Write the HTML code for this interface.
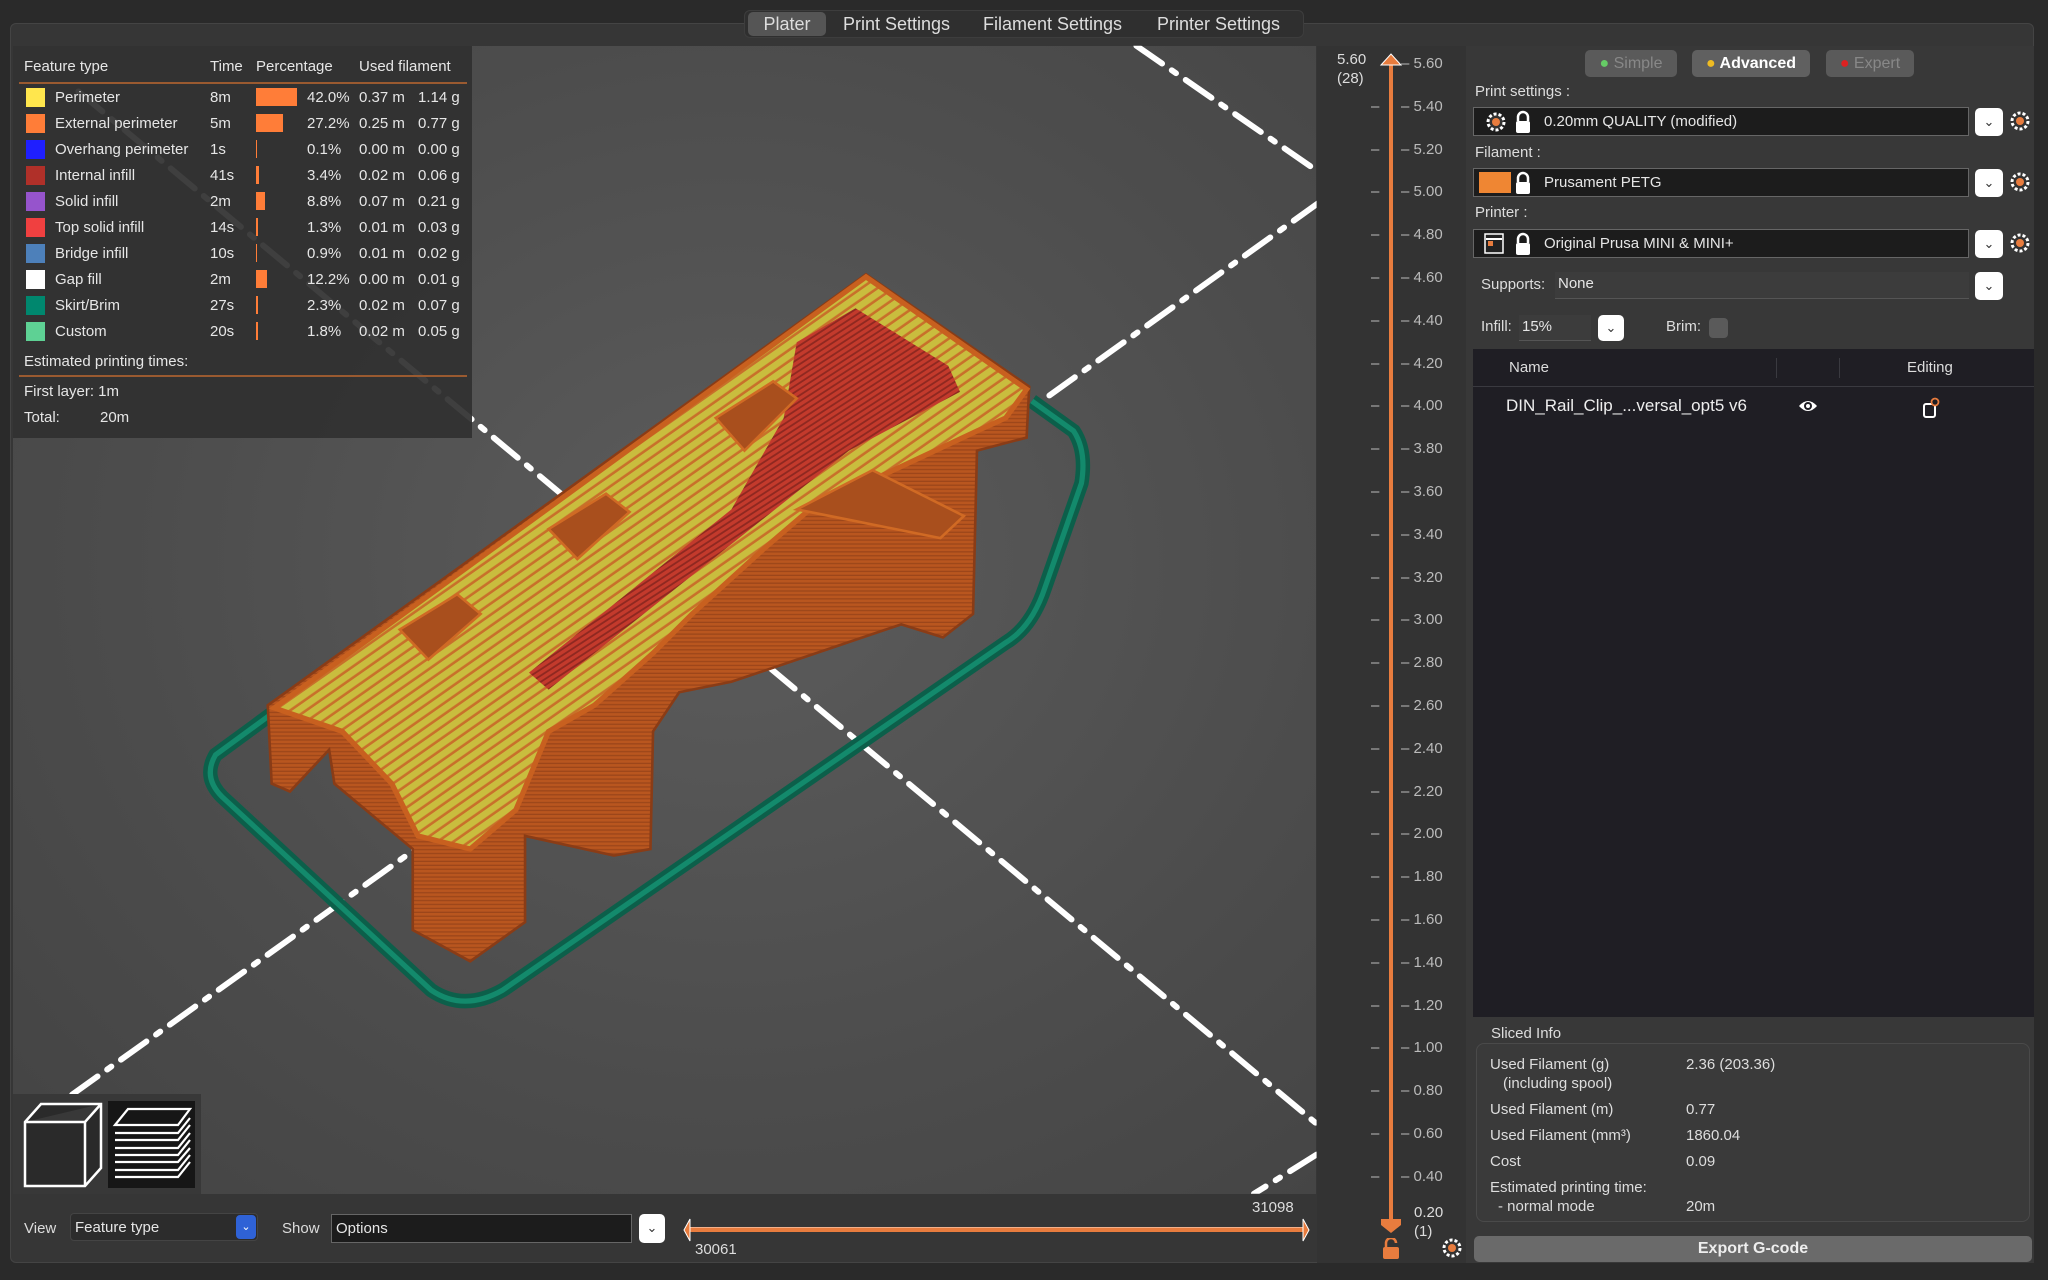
<!DOCTYPE html>
<html><head><meta charset="utf-8"><style>
*{margin:0;padding:0;box-sizing:border-box}
body{width:2048px;height:1280px;background:#2a2a2a;font-family:"Liberation Sans",sans-serif;color:#e6e6e6;position:relative;overflow:hidden;font-size:15px}
.a{position:absolute}
.frame{left:10px;top:23px;width:2024px;height:1240px;background:#363636;border:1px solid #444;border-radius:6px}
.vp{left:13px;top:46px;width:1303px;height:1148px;background:radial-gradient(ellipse at 55% 45%,#5c5c5c,#4c4c4c 60%,#434343)}
.tabs{left:744px;top:10px;height:28px;width:560px;background:#2f2f2f;border:1px solid #3d3d3d;border-radius:6px}
.tab{top:0;height:26px;line-height:26px;font-size:18px;color:#ddd}
.leg{left:13px;top:46px;width:459px;height:392px;background:rgba(48,48,48,0.93)}
.leg div{position:absolute;white-space:nowrap}
.sw{width:19px;height:19px}
.bar{height:18px;background:#ff7d38}
.line{height:2px;background:#9a5a30}
.rp{left:1466px;top:46px;width:568px;height:1217px;background:#383838}
.vs{left:1317px;top:46px;width:149px;height:1217px;background:#333}
.btn{border-radius:5px;background:#5a5a5a;height:27px;font-size:16px;line-height:27px;text-align:center;color:#888}
.combo{background:#1c1c1c;border:1px solid #666;height:29px;font-size:15px;line-height:27px}
.dd{width:28px;height:28px;background:#fff;border-radius:5px;color:#333;text-align:center;font-size:13px;line-height:28px}
.lbl{font-size:15px;color:#ddd}
.ol{left:1473px;top:349px;width:561px;height:668px;background:#1f1e24}
.si div{position:absolute;white-space:nowrap;font-size:15px;color:#ddd}
.tk{font-size:15px;color:#bbb;white-space:nowrap}
</style></head><body>
<div class="a frame"></div>
<div class="a vp"></div>
<svg class="a" style="left:0;top:0" width="2048" height="1280" viewBox="0 0 1568 980">
<defs>
<pattern id="st" width="6" height="4" patternUnits="userSpaceOnUse" patternTransform="rotate(-33)"><rect width="6" height="4" fill="#c33a2c"/><rect y="2.6" width="6" height="1.4" fill="#8f2820"/></pattern>
<pattern id="ly" width="4" height="3" patternUnits="userSpaceOnUse"><rect width="4" height="3" fill="#b9561f"/><rect y="2" width="4" height="1" fill="#9c461a"/></pattern>
<pattern id="yl" width="8" height="7" patternUnits="userSpaceOnUse" patternTransform="rotate(-35)"><rect width="8" height="7" fill="#c9bd3e"/><rect y="5" width="8" height="2" fill="#c8702a"/></pattern>
<clipPath id="vc"><rect x="10" y="35" width="998" height="879"/></clipPath>
</defs>
<g clip-path="url(#vc)">
<g stroke="#fff" stroke-width="4.5" stroke-dasharray="24 9 4 9" fill="none" stroke-linecap="round">
<line x1="870" y1="35" x2="1010" y2="132"/>
<line x1="60" y1="70" x2="1010" y2="862"/>
<line x1="1010" y1="155" x2="5" y2="874"/>
<line x1="1008" y1="884" x2="960" y2="914"/>
</g>
<path d="M790,307 L822,330 Q832,345 828,370 L800,450 Q790,480 770,492 L385,758 Q355,775 330,758 L170,610 Q155,595 165,578 L210,545" stroke="#0c5f4a" stroke-width="11" fill="none"/>
<path d="M790,307 L822,330 Q832,345 828,370 L800,450 Q790,480 770,492 L385,758 Q355,775 330,758 L170,610 Q155,595 165,578 L210,545" stroke="#138a6c" stroke-width="4" fill="none"/>
<path d="M663,210 L788,296 L786,335 L748,345 L745,470 L722,488 L690,478 L560,522 L520,530 L500,560 L498,650 L470,655 L402,640 L402,706 L360,736 L316,712 L316,650 L256,600 L252,574 L222,606 L208,600 L205,540 Z" fill="url(#ly)" stroke="#8a3c16" stroke-width="2"/>
<path d="M663,212 L786,298 L770,320 L748,330 L620,390 L585,420 L530,470 L500,500 L455,540 L420,560 L395,620 L360,650 L320,640 L300,600 L262,560 L210,542 Z" fill="url(#yl)" stroke="#c8601f" stroke-width="4"/>
<path d="M655,236 L726,280 L735,300 L650,345 L420,528 L405,515 L560,390 L600,320 L610,262 Z" fill="url(#st)"/>
<g fill="#a94f1d" stroke="#d06a24" stroke-width="2">
<path d="M548,320 L592,292 L610,305 L570,345 Z"/>
<path d="M420,405 L464,378 L482,392 L442,428 Z"/>
<path d="M306,482 L350,455 L368,470 L328,505 Z"/>
<path d="M610,390 L668,360 L738,395 L720,412 L650,398 Z"/>
</g>
</g>
</svg>
<div class="a tabs">
<div class="a tab" style="left:3px;top:1px;width:78px;height:24px;background:#555;border-radius:5px;text-align:center;line-height:24px">Plater</div>
<div class="a tab" style="left:98px">Print Settings</div>
<div class="a tab" style="left:238px">Filament Settings</div>
<div class="a tab" style="left:412px">Printer Settings</div>
</div>
<div class="a leg">
<div style="left:11px;top:12px">Feature type</div><div style="left:197px;top:12px">Time</div><div style="left:243px;top:12px">Percentage</div><div style="left:346px;top:12px">Used filament</div>
<div class="line" style="left:6px;top:36px;width:448px"></div>
<div class="sw" style="left:13px;top:42px;background:#ffe64d"></div><div style="left:42px;top:43px">Perimeter</div><div style="left:197px;top:43px">8m</div><div class="bar" style="left:243px;top:42px;width:41px"></div><div style="left:294px;top:43px">42.0%</div><div style="left:346px;top:43px">0.37 m</div><div style="left:405px;top:43px">1.14 g</div>
<div class="sw" style="left:13px;top:68px;background:#ff7d38"></div><div style="left:42px;top:69px">External perimeter</div><div style="left:197px;top:69px">5m</div><div class="bar" style="left:243px;top:68px;width:27px"></div><div style="left:294px;top:69px">27.2%</div><div style="left:346px;top:69px">0.25 m</div><div style="left:405px;top:69px">0.77 g</div>
<div class="sw" style="left:13px;top:94px;background:#1f1fff"></div><div style="left:42px;top:95px">Overhang perimeter</div><div style="left:197px;top:95px">1s</div><div class="bar" style="left:243px;top:94px;width:1px"></div><div style="left:294px;top:95px">0.1%</div><div style="left:346px;top:95px">0.00 m</div><div style="left:405px;top:95px">0.00 g</div>
<div class="sw" style="left:13px;top:120px;background:#b03029"></div><div style="left:42px;top:121px">Internal infill</div><div style="left:197px;top:121px">41s</div><div class="bar" style="left:243px;top:120px;width:3px"></div><div style="left:294px;top:121px">3.4%</div><div style="left:346px;top:121px">0.02 m</div><div style="left:405px;top:121px">0.06 g</div>
<div class="sw" style="left:13px;top:146px;background:#9654cc"></div><div style="left:42px;top:147px">Solid infill</div><div style="left:197px;top:147px">2m</div><div class="bar" style="left:243px;top:146px;width:9px"></div><div style="left:294px;top:147px">8.8%</div><div style="left:346px;top:147px">0.07 m</div><div style="left:405px;top:147px">0.21 g</div>
<div class="sw" style="left:13px;top:172px;background:#f04040"></div><div style="left:42px;top:173px">Top solid infill</div><div style="left:197px;top:173px">14s</div><div class="bar" style="left:243px;top:172px;width:2px"></div><div style="left:294px;top:173px">1.3%</div><div style="left:346px;top:173px">0.01 m</div><div style="left:405px;top:173px">0.03 g</div>
<div class="sw" style="left:13px;top:198px;background:#4d80ba"></div><div style="left:42px;top:199px">Bridge infill</div><div style="left:197px;top:199px">10s</div><div class="bar" style="left:243px;top:198px;width:1px"></div><div style="left:294px;top:199px">0.9%</div><div style="left:346px;top:199px">0.01 m</div><div style="left:405px;top:199px">0.02 g</div>
<div class="sw" style="left:13px;top:224px;background:#fff"></div><div style="left:42px;top:225px">Gap fill</div><div style="left:197px;top:225px">2m</div><div class="bar" style="left:243px;top:224px;width:11px"></div><div style="left:294px;top:225px">12.2%</div><div style="left:346px;top:225px">0.00 m</div><div style="left:405px;top:225px">0.01 g</div>
<div class="sw" style="left:13px;top:250px;background:#00876e"></div><div style="left:42px;top:251px">Skirt/Brim</div><div style="left:197px;top:251px">27s</div><div class="bar" style="left:243px;top:250px;width:2px"></div><div style="left:294px;top:251px">2.3%</div><div style="left:346px;top:251px">0.02 m</div><div style="left:405px;top:251px">0.07 g</div>
<div class="sw" style="left:13px;top:276px;background:#5ed194"></div><div style="left:42px;top:277px">Custom</div><div style="left:197px;top:277px">20s</div><div class="bar" style="left:243px;top:276px;width:2px"></div><div style="left:294px;top:277px">1.8%</div><div style="left:346px;top:277px">0.02 m</div><div style="left:405px;top:277px">0.05 g</div>
<div style="left:11px;top:307px">Estimated printing times:</div>
<div class="line" style="left:6px;top:329px;width:448px"></div>
<div style="left:11px;top:337px">First layer: 1m</div>
<div style="left:11px;top:363px">Total:</div><div style="left:87px;top:363px">20m</div>
</div>
<div class="a" style="left:13px;top:1094px;width:188px;height:100px;background:#383838"></div>
<svg class="a" style="left:18px;top:1100px" width="180" height="90" viewBox="0 0 180 90">
<path d="M7,22 L23,4 L83,4 L83,68 L67,86 L7,86 Z M7,22 L67,22 L83,4 M67,22 L67,86" fill="#2a2a2a" stroke="#fff" stroke-width="2.5"/>
<rect x="90" y="1" width="87" height="87" fill="#161616"/>
<g stroke="#fff" stroke-width="2.2" fill="none"><path d="M97,25 L110,9 L172,9 L160,25 Z"/>
<path d="M97,33 L160,33 L172,18"/><path d="M97,40 L160,40 L172,25"/><path d="M97,48 L160,48 L172,33"/><path d="M97,55 L160,55 L172,40"/><path d="M97,62 L160,62 L172,48"/><path d="M97,70 L160,70 L172,55"/><path d="M97,77 L160,77 L172,62"/></g>
</svg>
<div class="a lbl" style="left:24px;top:1220px">View</div>
<div class="a combo" style="left:70px;top:1213px;width:188px;height:28px;background:#2c2c2c;border-color:#444;border-radius:4px;padding-left:4px">Feature type</div>
<div class="a" style="left:236px;top:1215px;width:20px;height:24px;background:#2f62d6;border-radius:4px;color:#fff;font-size:11px;text-align:center;line-height:24px">&#8964;</div>
<div class="a lbl" style="left:282px;top:1220px">Show</div>
<div class="a combo" style="left:331px;top:1214px;width:301px;padding-left:4px">Options</div>
<div class="a dd" style="left:639px;top:1214px;width:26px;height:29px">&#8964;</div>
<div class="a" style="left:688px;top:1227px;width:616px;height:5px;background:#e87c3e;border-top:1px solid #f3b08a"></div>
<svg class="a" style="left:682px;top:1217px" width="630" height="26"><path d="M2,13 L8,2 L8,24 Z" fill="#e87c3e" stroke="#fff" stroke-width="1"/><path d="M627,13 L621,2 L621,24 Z" fill="#e87c3e" stroke="#fff" stroke-width="1"/></svg>
<div class="a tk" style="left:1252px;top:1199px;color:#ddd">31098</div>
<div class="a tk" style="left:695px;top:1241px;color:#ddd">30061</div>
<div class="a vs"></div>
<div class="a" style="left:1389px;top:62px;width:4px;height:1164px;background:#e87c3e"></div>
<svg class="a" style="left:1379px;top:52px" width="24" height="14"><path d="M2,13 L12,2 L22,13 Z" fill="#e87c3e" stroke="#fff"/></svg>
<svg class="a" style="left:1379px;top:1218px" width="24" height="16"><path d="M2,1 L22,1 L22,7 L12,15 L2,7 Z" fill="#e87c3e"/></svg>
<div class="a" style="left:1337px;top:50px;font-size:15px;line-height:19px;color:#ddd">5.60<br>(28)</div>
<div class="a" style="left:1414px;top:1203px;font-size:15px;line-height:19px;color:#ddd">0.20<br>(1)</div>
<div class="a" id="ticks"></div>
<svg class="a" style="left:1381px;top:1238px" width="20" height="22"><path d="M5,9 V5 a5,5 0 0 1 10,0" stroke="#e87c3e" stroke-width="2.5" fill="none"/><rect x="2" y="9" width="16" height="12" rx="2" fill="#e87c3e"/></svg>
<svg class="a" style="left:1441px;top:1237px" width="22" height="22"><circle cx="11" cy="11" r="8" fill="#333" stroke="#fff" stroke-width="3" stroke-dasharray="3 2"/><circle cx="11" cy="11" r="4" fill="#e87c3e"/></svg>
<div class="a rp"></div>
<div class="a btn" style="left:1585px;top:50px;width:92px"><span style="color:#6c6">●</span> Simple</div>
<div class="a btn" style="left:1692px;top:50px;width:118px;color:#fff;font-weight:bold;background:#606060"><span style="color:#eebb22">●</span> Advanced</div>
<div class="a btn" style="left:1826px;top:50px;width:88px"><span style="color:#d22">●</span> Expert</div>
<div class="a lbl" style="left:1475px;top:83px">Print settings :</div>
<div class="a combo" style="left:1473px;top:107px;width:496px;padding-left:70px">0.20mm QUALITY (modified)</div>
<div class="a lbl" style="left:1475px;top:144px">Filament :</div>
<div class="a combo" style="left:1473px;top:168px;width:496px;padding-left:70px">Prusament PETG</div>
<div class="a" style="left:1479px;top:172px;width:32px;height:21px;background:#ef8633"></div>
<div class="a lbl" style="left:1475px;top:204px">Printer :</div>
<div class="a combo" style="left:1473px;top:229px;width:496px;padding-left:70px">Original Prusa MINI &amp; MINI+</div>
<svg class="a" style="left:1484px;top:233px" width="20" height="21"><rect x="1" y="1" width="18" height="19" fill="#222" stroke="#fff" stroke-width="1.5"/><rect x="2" y="5" width="16" height="2" fill="#fff"/><rect x="4" y="8" width="5" height="5" fill="#e87c3e"/></svg>
<svg class="a" style="left:1485px;top:111px" width="22" height="22"><circle cx="11" cy="11" r="8" fill="#333" stroke="#fff" stroke-width="3" stroke-dasharray="3 2"/><circle cx="11" cy="11" r="4" fill="#e87c3e"/></svg>
<svg class="a" style="left:1514px;top:110px" width="18" height="150"><g fill="#fff"><path d="M4,11 V7 a5,5 0 0 1 10,0 V11" stroke="#fff" stroke-width="2.5" fill="none"/><rect x="2" y="11" width="14" height="12" rx="2"/><path d="M4,72 V68 a5,5 0 0 1 10,0 V72" stroke="#fff" stroke-width="2.5" fill="none"/><rect x="2" y="72" width="14" height="12" rx="2"/><path d="M4,133 V129 a5,5 0 0 1 10,0 V133" stroke="#fff" stroke-width="2.5" fill="none"/><rect x="2" y="133" width="14" height="12" rx="2"/></g></svg>
<div class="a dd" style="left:1975px;top:108px">&#8964;</div>
<div class="a dd" style="left:1975px;top:169px">&#8964;</div>
<div class="a dd" style="left:1975px;top:230px">&#8964;</div>
<div class="a dd" style="left:1975px;top:272px">&#8964;</div>
<div class="a dd" style="left:1598px;top:315px;width:26px;height:26px;line-height:26px">&#8964;</div>
<svg class="a" style="left:2009px;top:110px" width="22" height="150"><g fill="#333" stroke="#fff" stroke-width="3" stroke-dasharray="3 2"><circle cx="11" cy="11" r="8"/><circle cx="11" cy="72" r="8"/><circle cx="11" cy="133" r="8"/></g><g fill="#e87c3e"><circle cx="11" cy="11" r="4"/><circle cx="11" cy="72" r="4"/><circle cx="11" cy="133" r="4"/></g></svg>
<div class="a lbl" style="left:1481px;top:276px">Supports:</div>
<div class="a" style="left:1555px;top:272px;width:414px;height:27px;background:#3c3c3c;border-bottom:1px solid #555;font-size:15px;padding:3px 3px">None</div>
<div class="a lbl" style="left:1481px;top:318px">Infill:</div>
<div class="a" style="left:1519px;top:315px;width:72px;height:26px;background:#3c3c3c;border-bottom:1px solid #555;font-size:15px;padding:3px 3px">15%</div>
<div class="a lbl" style="left:1666px;top:318px">Brim:</div>
<div class="a" style="left:1709px;top:318px;width:19px;height:20px;background:#5a5a5a;border-radius:4px"></div>
<div class="a ol"></div>
<div class="a" style="left:1473px;top:386px;width:561px;height:1px;background:#3a3a40"></div>
<div class="a" style="left:1776px;top:358px;width:1px;height:20px;background:#3a3a40"></div>
<div class="a" style="left:1839px;top:358px;width:1px;height:20px;background:#3a3a40"></div>
<div class="a lbl" style="left:1509px;top:359px">Name</div>
<div class="a lbl" style="left:1907px;top:359px">Editing</div>
<div class="a" style="left:1506px;top:396px;font-size:17px;color:#eee">DIN_Rail_Clip_...versal_opt5 v6</div>
<svg class="a" style="left:1798px;top:398px" width="20" height="16"><path d="M1,8 Q10,-2 19,8 Q10,18 1,8 Z" fill="#fff"/><circle cx="10" cy="8" r="4" fill="#1f1e24"/><circle cx="10" cy="8" r="2" fill="#fff"/></svg>
<svg class="a" style="left:1922px;top:397px" width="18" height="22"><rect x="2" y="7" width="11" height="13" rx="2" fill="none" stroke="#fff" stroke-width="2"/><circle cx="13" cy="5" r="3.5" fill="#1f1e24" stroke="#e87c3e" stroke-width="1.8"/></svg>
<div class="a lbl" style="left:1491px;top:1025px">Sliced Info</div>
<div class="a si" style="left:1476px;top:1043px;width:554px;height:179px;border:1px solid #4a4a4a;border-radius:8px;background:#3a3a3a">
<div style="left:13px;top:12px">Used Filament (g)</div><div style="left:209px;top:12px">2.36 (203.36)</div>
<div style="left:26px;top:31px">(including spool)</div>
<div style="left:13px;top:57px">Used Filament (m)</div><div style="left:209px;top:57px">0.77</div>
<div style="left:13px;top:83px">Used Filament (mm³)</div><div style="left:209px;top:83px">1860.04</div>
<div style="left:13px;top:109px">Cost</div><div style="left:209px;top:109px">0.09</div>
<div style="left:13px;top:135px">Estimated printing time:</div>
<div style="left:21px;top:154px">- normal mode</div><div style="left:209px;top:154px">20m</div>
</div>
<div class="a" style="left:1474px;top:1236px;width:558px;height:26px;background:#6a6a6a;border-radius:5px;text-align:center;font-weight:bold;font-size:16px;line-height:26px;color:#eee">Export G-code</div>
<script>
var t=document.getElementById('ticks'),h='';
for(var i=1;i<=26;i++){var v=(5.6-0.2*i+0.0001).toFixed(2);var y=64+42.8*i;
h+='<div class="a tk" style="left:1371px;top:'+(y-9)+'px">–</div><div class="a tk" style="left:1401px;top:'+(y-9)+'px">– '+v+'</div>';}
h+='<div class="a tk" style="left:1401px;top:55px">– 5.60</div>';
t.innerHTML=h;t.style.left='0';t.style.top='0';
</script>
</body></html>
